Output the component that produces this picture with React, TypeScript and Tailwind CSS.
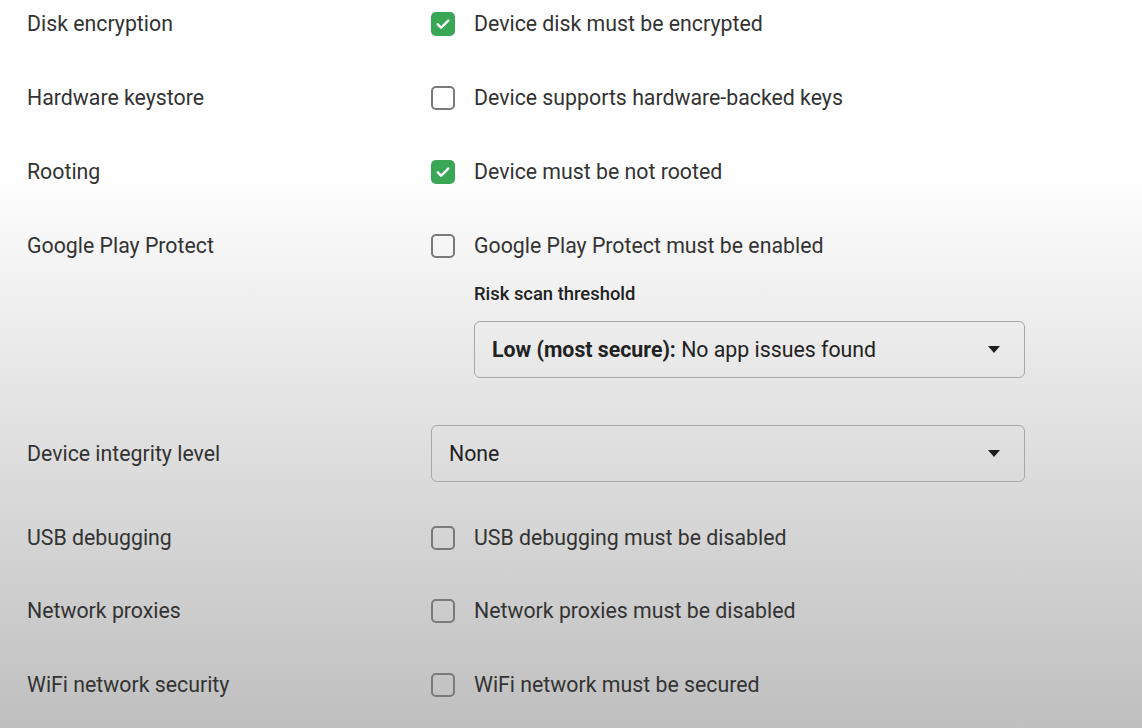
import * as React from "react";

/* ─── Small pieces ─── */
function CheckMark() {
  return (
    <svg viewBox="0 0 24 24" className="h-[18px] w-[18px]" fill="none">
      <path d="M5 12.5l4.5 4.5L19 7.5" stroke="white" strokeWidth="3.2" strokeLinecap="round" strokeLinejoin="round" />
    </svg>
  );
}

function Checkbox({ checked }: { checked?: boolean }) {
  if (checked) {
    return (
      <div className="h-[24px] w-[24px] shrink-0 rounded-[5px] bg-[#3aa757] flex items-center justify-center">
        <CheckMark />
      </div>
    );
  }
  return <div className="h-[24px] w-[24px] shrink-0 rounded-[5px] border-2 border-[#7a7a7a]" />;
}

function Caret() {
  return (
    <svg viewBox="0 0 12 7" className="h-[7px] w-[12px]">
      <path d="M0 0h12L6 7z" fill="#1f1f1f" />
    </svg>
  );
}

function Select({ children, className }: { children: React.ReactNode; className?: string }) {
  return (
    <div
      className={
        "flex h-[57px] items-center justify-between rounded-[6px] border-[1.5px] border-[#a8a8a8] pl-[17px] pr-[24px] text-[21.3px] text-[#222] " +
        (className ?? "")
      }
    >
      <span>{children}</span>
      <Caret />
    </div>
  );
}

function Row({ label, text, checked, className }: { label: string; text: string; checked?: boolean; className?: string }) {
  return (
    <div className={"flex h-[46px] items-center " + (className ?? "")}>
      <div className="w-[404px] shrink-0">{label}</div>
      <div className="flex items-center gap-[19px]">
        <Checkbox checked={checked} />
        <span>{text}</span>
      </div>
    </div>
  );
}

export default function App() {
  return (
    <div
      className="h-[728px] w-full overflow-hidden bg-linear-to-b from-white from-[23%] to-[#bfbfbf] pl-[27px] pt-[1px] text-[21.3px] text-[#333]"
      style={{ fontFamily: "Roboto, 'Noto Sans', sans-serif" }}
    >
      <div className="flex flex-col">
        <Row label="Disk encryption" text="Device disk must be encrypted" checked />
        <Row className="mt-[28px]" label="Hardware keystore" text="Device supports hardware-backed keys" />
        <Row className="mt-[28px]" label="Rooting" text="Device must be not rooted" checked />
        <Row className="mt-[28px]" label="Google Play Protect" text="Google Play Protect must be enabled" />

        {/* Risk scan threshold */}
        <div className="ml-[447px] mt-[15px] text-[18.4px] font-medium leading-[20px] text-[#222]">Risk scan threshold</div>
        <Select className="ml-[447px] mt-[17px] w-[551px]">
          <b className="font-bold">Low (most secure):</b> No app issues found
        </Select>

        {/* Device integrity */}
        <div className="mt-[47px] flex items-center">
          <div className="w-[404px] shrink-0">Device integrity level</div>
          <Select className="w-[594px]">None</Select>
        </div>

        <Row className="mt-[33px]" label="USB debugging" text="USB debugging must be disabled" />
        <Row className="mt-[27px]" label="Network proxies" text="Network proxies must be disabled" />
        <Row className="mt-[28px]" label="WiFi network security" text="WiFi network must be secured" />
      </div>
    </div>
  );
}
